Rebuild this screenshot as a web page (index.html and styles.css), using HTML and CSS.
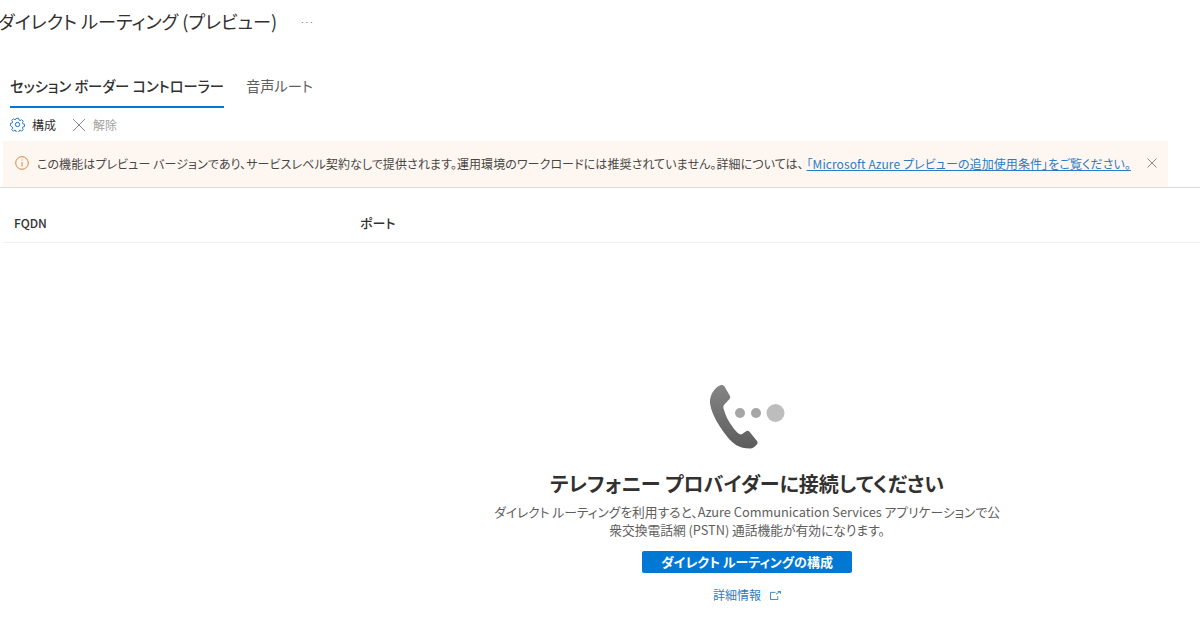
FILE: index.html
```html
<!DOCTYPE html>
<html lang="ja">
<head>
<meta charset="utf-8">
<title>ダイレクト ルーティング (プレビュー)</title>
<link rel="stylesheet" href="styles.css">
</head>
<body>
<header class="title-row">
  <h1 class="title">ダイレクト ルーティング (プレビュー)</h1>
  <span class="more">···</span>
</header>
<nav class="tabs">
  <a class="tab active">セッション ボーダー コントローラー</a>
  <a class="tab">音声ルート</a>
</nav>
<div class="toolbar">
  <button class="tool">
    <svg class="tool-icon" viewBox="0 0 16 16" fill="none" stroke="#0f6cbd" stroke-width="1">
      <circle cx="8" cy="8" r="2.3"/>
      <path d="M6.700 1h2.600l.4 1.900 1.300.6 1.700-1 1.800 1.800-1 1.700.6 1.300 1.900.4v2.600l-1.900.4-.6 1.300 1 1.700-1.800 1.800-1.700-1-1.300.6-.4 1.900H6.700l-.4-1.900-1.300-.6-1.700 1-1.800-1.800 1-1.700-.6-1.300L0 9.300V6.700l1.900-.4.6-1.300-1-1.700 1.800-1.800 1.700 1 1.300-.6z" transform="translate(.5 .5) scale(.94)"/>
    </svg>
    <span>構成</span>
  </button>
  <button class="tool disabled">
    <svg class="tool-icon x" viewBox="0 0 14 14" fill="none" stroke="#8a8886" stroke-width="1"><path d="M1 1l12 12M13 1L1 13"/></svg>
    <span>解除</span>
  </button>
</div>
<div class="banner-wrap">
  <div class="banner">
    <svg class="info" viewBox="0 0 14 14" fill="none" stroke="#d9833f"><circle cx="7" cy="7" r="6.300"/><path d="M7 3.500v1M7 6v4.500"/></svg>
    <p class="banner-text">この機能はプレビュー バージョンであり、サービスレベル契約なしで提供されます。運用環境のワークロードには推奨されていません。詳細については、 <a class="banner-link">「Microsoft Azure プレビューの追加使用条件」をご覧ください。</a></p>
    <svg class="close" viewBox="0 0 10 10" fill="none" stroke="#8a8886"><path d="M.5.5l9 9M9.500.5l-9 9"/></svg>
  </div>
</div>
<div class="table-head">
  <div class="col-fqdn">FQDN</div>
  <div class="col-port">ポート</div>
</div>
<main class="empty">
  <svg class="phone" viewBox="0 0 80 70">
    <defs>
      <linearGradient id="ph" x1="0" y1="0" x2="0" y2="1"><stop offset="0" stop-color="#858585"/><stop offset="1" stop-color="#5c5c5c"/></linearGradient>
    </defs>
    <path fill="url(#ph)" d="M14 4C15.500 3.600 16.700 4.200 17.500 5.500L23 15C23.500 16 23.300 17 22.500 18L17 24C16.300 25 16.200 26.500 16.700 28C18.500 34 21 40 25 45C27 48 30 52 33 53.300C34.500 53.800 35.500 53 36.500 52L39.500 50C40.500 49.500 41.800 49.800 42.500 50.800L50 60C50.800 61 50.800 62.500 49.800 63.500C48 65.500 46 67.500 43 67.500C38 67.500 33 66.500 29 64C23 60 18 53 13.500 46.500C8 38 4 30 3 22C2.500 15 6.500 7 14 4Z"/>
    <circle cx="33" cy="32" r="5" fill="#a6a6a6"/>
    <circle cx="49" cy="32" r="5" fill="#a6a6a6"/>
    <circle cx="68.500" cy="32" r="9" fill="#bdbdbd"/>
  </svg>
  <h2 class="empty-title">テレフォニー プロバイダーに接続してください</h2>
  <p class="empty-text">ダイレクト ルーティングを利用すると、Azure Communication Services アプリケーションで公衆交換電話網 (PSTN) 通話機能が有効になります。</p>
  <button class="primary">ダイレクト ルーティングの構成</button>
  <a class="more-link">詳細情報
    <svg class="ext" viewBox="0 0 12 10" fill="none" stroke="#0f6cbd" stroke-width=".9"><path d="M6 1.500H.5v8h8V6M6.500 3.500L11 .8M8.500.5H11.500V3"/></svg>
  </a>
</main>
</body>
</html>
```
FILE: styles.css
```css
* { box-sizing: border-box; }
html, body { margin: 0; padding: 0; }
body {
  width: 1200px;
  height: 633px;
  overflow: hidden;
  background: #fff;
  color: #323130;
  font-family: "Noto Sans CJK JP", "Open Sans", sans-serif;
  font-feature-settings: "palt";
}
.title-row {
  display: flex;
  align-items: center;
  height: 42px;
  margin-left: -2px;
}
.title {
  margin: 0;
  font-size: 18.200px;
  font-weight: 400;
  line-height: 42px;
}
.more { margin-left: 23px; font-size: 8px; color: #605e5c; }
.tabs {
  display: flex;
  gap: 22px;
  margin: 23px 0 0 10px;
  height: 43px;
}
.tab {
  font-size: 14.250px;
  line-height: 42px;
  height: 43px;
  color: #605e5c;
  white-space: nowrap;
}
.tab.active {
  color: #323130;
  font-weight: 500;
  border-bottom: 2px solid #0078d4;
}
.toolbar {
  display: flex;
  align-items: center;
  gap: 16px;
  height: 33px;
  padding-left: 10px;
}
.tool {
  display: flex;
  align-items: center;
  gap: 7px;
  padding: 0;
  border: 0;
  background: none;
  font: inherit;
  font-size: 12px;
  color: #323130;
}
.tool.disabled { color: #a19f9d; }
.tool-icon { width: 15px; height: 15px; }
.tool-icon.x { width: 14px; height: 14px; }
.banner-wrap {
  border-bottom: 1px solid #dedcdb;
  padding-left: 3px;
}
.banner {
  display: flex;
  align-items: center;
  width: 1165px;
  height: 46px;
  padding: 0 0 2px 12px;
  background: #fef7f1;
}
.info { width: 14px; height: 14px; flex: none; }
.banner-text {
  margin: 0 0 0 8px;
  font-size: 12px;
  color: #484644;
  white-space: nowrap;
  letter-spacing: .085px;
}
.banner-link { color: #2b7cc4; text-decoration: underline; text-underline-offset: 1px; }
.close { width: 10px; height: 10px; margin-left: auto; margin-right: 11px; flex: none; }
.table-head {
  display: flex;
  align-items: center;
  margin: 17px 0 0 3px;
  height: 38px;
  padding-bottom: 3px;
  border-bottom: 1px solid #f0f0f0;
  font-size: 13px;
  font-weight: 500;
  color: #323130;
}
.col-fqdn { width: 357px; padding-left: 11px; font-size: 12px; }
.empty {
  display: flex;
  flex-direction: column;
  align-items: center;
  width: 520px;
  margin: 138px 0 0 487px;
}
.phone { width: 80px; height: 70px; }
.empty-title {
  margin: 20px 0 0;
  font-size: 20px;
  font-weight: 700;
  line-height: 26px;
  white-space: nowrap;
}
.empty-text {
  margin: 6px 0 0;
  width: 512px;
  font-size: 12.750px;
  line-height: 18px;
  text-align: center;
  color: #605e5c;
}
.primary {
  width: 210px;
  height: 22px;
  margin-top: 12px;
  padding: 0;
  border: 0;
  border-radius: 2px;
  background: #0078d4;
  color: #fff;
  font: inherit;
  font-size: 13px;
  font-weight: 700;
  line-height: 22px;
}
.more-link {
  display: flex;
  align-items: center;
  gap: 9px;
  margin-top: 13px;
  font-size: 12px;
  line-height: 18px;
  color: #2b7cc4;
}
.ext { width: 11px; height: 9px; }
```
